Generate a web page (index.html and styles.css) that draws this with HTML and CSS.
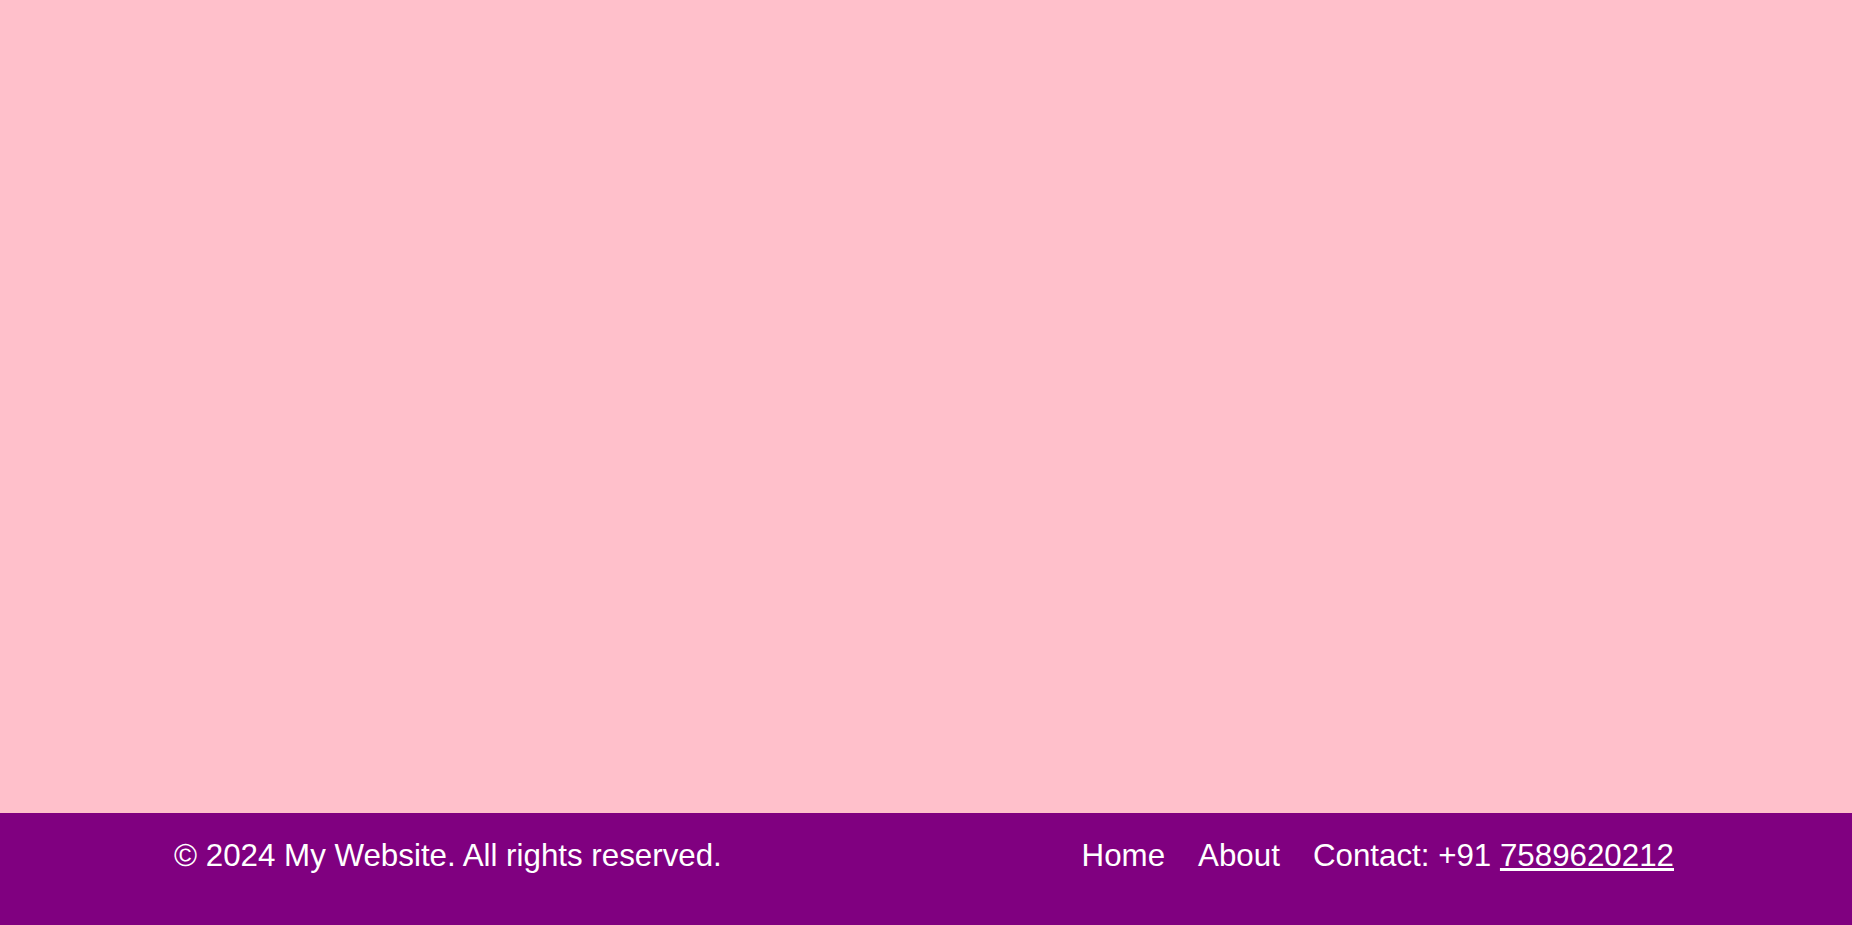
FILE: index.html
```html
<!DOCTYPE html>
<html lang="en">
<head>
<meta charset="utf-8">
<title>My Website</title>
<link rel="stylesheet" href="styles.css">
</head>
<body>
<main class="main"></main>
<footer class="footer">
  <p class="copy">© 2024 My Website. All rights reserved.</p>
  <nav class="links">
    <a class="nav-link" href="#">Home</a>
    <a class="nav-link" href="#">About</a>
    <span class="contact">Contact: +91 <a class="phone" href="#">7589620212</a></span>
  </nav>
</footer>
</body>
</html>
```
FILE: styles.css
```css
html, body {
  margin: 0;
  padding: 0;
}
body {
  font-family: "Liberation Sans", Arial, sans-serif;
  background: #ffc0cb;
  height: 925px;
  display: flex;
  flex-direction: column;
}
.main {
  flex: 0 0 813px;
  background: #ffc0cb;
}
.footer {
  flex: 1;
  background: #800080;
  color: #ffffff;
  font-size: 31.3px;
  display: flex;
  justify-content: space-between;
  align-items: flex-start;
  padding: 25px 178px 0 174px;
}
.copy {
  margin: 0;
}
.links {
  display: flex;
  gap: 33px;
}
.nav-link {
  color: #ffffff;
  text-decoration: none;
}
.phone {
  color: #ffffff;
  text-decoration: underline;
}
```
